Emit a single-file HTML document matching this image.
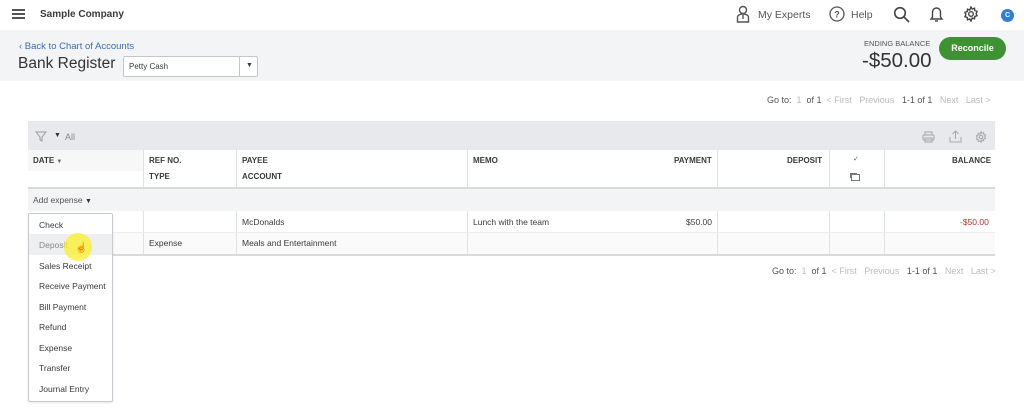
<!DOCTYPE html>
<html><head><meta charset="utf-8"><style>
*{box-sizing:border-box;margin:0;padding:0}
body{width:1024px;height:411px;overflow:hidden;background:#fff;font-family:"Liberation Sans",sans-serif;color:#393a3d;position:relative;font-size:9px}
.a{position:absolute;white-space:nowrap}
.vl{position:absolute;width:1px;background:#e0e2e6}
.hd{font-weight:bold;font-size:8px;color:#393a3d}
.mi{position:absolute;left:10px;font-size:8.5px;color:#393a3d}
</style></head><body>
<div class="a" style="left:12px;top:9px;width:13px;height:2px;background:#555;box-shadow:0 4px 0 #555,0 8px 0 #555"></div>
<div class="a" style="left:40px;top:9px;font-size:10px;font-weight:bold;color:#393a3d">Sample Company</div>
<svg class="a" style="left:736px;top:5px" width="14" height="18" viewBox="0 0 14 18" fill="none" stroke="#555" stroke-width="1.4"><circle cx="7" cy="5" r="3.5"/><path d="M1.5 17v-5a5.5 3 0 0 1 11 0v5z"/><path d="M7 10v4"/></svg>
<div class="a" style="left:758px;top:9px;font-size:10.5px;color:#555">My Experts</div>
<svg class="a" style="left:829px;top:6px" width="16" height="16" viewBox="0 0 16 16" fill="none" stroke="#555" stroke-width="1.3"><circle cx="8" cy="8" r="7"/><text x="8" y="11.5" font-size="9" text-anchor="middle" fill="#555" stroke="none" font-family="Liberation Sans" font-weight="bold">?</text></svg>
<div class="a" style="left:851px;top:9px;font-size:10.5px;color:#555">Help</div>
<svg class="a" style="left:893px;top:6px" width="17" height="17" viewBox="0 0 17 17" fill="none" stroke="#444" stroke-width="1.6"><circle cx="7" cy="7" r="5.3"/><path d="M11 11l5 5"/></svg>
<svg class="a" style="left:929px;top:5px" width="15" height="18" viewBox="0 0 15 18" fill="none" stroke="#444" stroke-width="1.4"><path d="M2 14h11l-1.5-2V7a4 4 0 0 0-8 0v5z"/><path d="M6 16h3"/></svg>
<svg class="a" style="left:963px;top:6px" width="16" height="16" viewBox="0 0 16 16" fill="none" stroke="#444" stroke-width="1.4"><circle cx="8" cy="8" r="2.3"/><path d="M8 1l1.2 2 2.3-.8.3 2.4 2.3.7-1 2.2 1 2.2-2.3.7-.3 2.4-2.3-.8L8 15l-1.2-2-2.3.8-.3-2.4-2.3-.7 1-2.2-1-2.2 2.3-.7.3-2.4 2.3.8z"/></svg>
<div class="a" style="left:1001px;top:9px;width:13px;height:13px;border-radius:50%;background:#2e7fd8;color:#fff;font-size:7px;text-align:center;line-height:13px;font-weight:bold">C</div>
<div class="a" style="left:0;top:30px;width:1024px;height:51px;background:#f3f4f6"></div>
<div class="a" style="left:19px;top:41px;font-size:9.5px;color:#3a6fb0">‹ Back to Chart of Accounts</div>
<div class="a" style="left:18px;top:55px;font-size:15.5px;color:#333">Bank Register</div>
<div class="a" style="left:123px;top:56px;width:135px;height:21px;border:1px solid #c4c6cc;background:#fff;border-radius:2px"></div>
<div class="a" style="left:129px;top:62px;font-size:8px">Petty Cash</div>
<div class="a" style="left:239px;top:57px;width:1px;height:19px;background:#c4c6cc"></div>
<div class="a" style="left:246px;top:62px;font-size:7px">▼</div>
<div class="a" style="left:864px;top:39px;font-size:7.5px;color:#555">ENDING BALANCE</div>
<div class="a" style="left:862px;top:49px;font-size:20.5px;color:#333">-$50.00</div>
<div class="a" style="left:939px;top:37px;width:67px;height:23px;border-radius:12px;background:#3f9233;color:#fff;font-weight:bold;font-size:9px;text-align:center;line-height:23px">Reconcile</div>
<div class="a" style="left:767px;top:95px;font-size:9px;color:#555">Go to: <span style="color:#bbb">&nbsp;1&nbsp;</span> of 1 <span style="color:#bbb">&nbsp;&lt; First &nbsp;&nbsp;Previous&nbsp;</span> &nbsp;1-1 of 1 <span style="color:#bbb">&nbsp;&nbsp;Next &nbsp;&nbsp;Last &gt;</span></div>
<div class="a" style="left:772px;top:266px;font-size:9px;color:#555">Go to: <span style="color:#bbb">&nbsp;1&nbsp;</span> of 1 <span style="color:#bbb">&nbsp;&lt; First &nbsp;&nbsp;Previous&nbsp;</span> &nbsp;1-1 of 1 <span style="color:#bbb">&nbsp;&nbsp;Next &nbsp;&nbsp;Last &gt;</span></div>
<div class="a" style="left:28px;top:121px;width:967px;height:29px;background:#e8e9ec"></div>
<svg class="a" style="left:35px;top:131px" width="12" height="11" viewBox="0 0 12 11" fill="none" stroke="#999" stroke-width="1"><path d="M1 1h10L7 6v4L5 9V6z"/></svg>
<div class="a" style="left:54px;top:132px;font-size:7px;color:#333">▼</div>
<div class="a" style="left:65px;top:132px;font-size:9px;color:#888">All</div>
<svg class="a" style="left:922px;top:131px" width="13" height="12" viewBox="0 0 13 12" fill="none" stroke="#aaa" stroke-width="1.1"><rect x="3" y="1" width="7" height="3"/><rect x="1" y="4" width="11" height="5" rx="1"/><rect x="3" y="7" width="7" height="4"/></svg>
<svg class="a" style="left:949px;top:130px" width="13" height="13" viewBox="0 0 13 13" fill="none" stroke="#aaa" stroke-width="1.1"><path d="M6.5 9V1M3.5 4l3-3 3 3M1 7v5h11V7"/></svg>
<svg class="a" style="left:975px;top:131px" width="12" height="12" viewBox="0 0 16 16" fill="none" stroke="#aaa" stroke-width="1.5"><circle cx="8" cy="8" r="2.3"/><path d="M8 1l1.2 2 2.3-.8.3 2.4 2.3.7-1 2.2 1 2.2-2.3.7-.3 2.4-2.3-.8L8 15l-1.2-2-2.3.8-.3-2.4-2.3-.7 1-2.2-1-2.2 2.3-.7.3-2.4 2.3.8z"/></svg>
<div class="a" style="left:28px;top:150px;width:115px;height:21px;background:#f7f7f8"></div>
<div class="a" style="left:28px;top:187px;width:967px;height:2px;background:#d8dade"></div>
<div class="vl" style="left:143px;top:150px;height:37px"></div>
<div class="vl" style="left:236px;top:150px;height:37px"></div>
<div class="vl" style="left:467px;top:150px;height:37px"></div>
<div class="vl" style="left:717px;top:150px;height:37px"></div>
<div class="vl" style="left:829px;top:150px;height:37px"></div>
<div class="vl" style="left:884px;top:150px;height:37px"></div>
<div class="a hd" style="left:33px;top:156px">DATE <span style="font-size:6px;color:#666">▼</span></div>
<div class="a hd" style="left:149px;top:156px">REF NO.</div>
<div class="a hd" style="left:149px;top:172px">TYPE</div>
<div class="a hd" style="left:242px;top:156px">PAYEE</div>
<div class="a hd" style="left:242px;top:172px">ACCOUNT</div>
<div class="a hd" style="left:473px;top:156px">MEMO</div>
<div class="a hd" style="left:674px;top:156px">PAYMENT</div>
<div class="a hd" style="left:787px;top:156px">DEPOSIT</div>
<div class="a" style="left:853px;top:155px;font-size:7px;color:#555">✓</div>
<div class="a" style="left:851px;top:174px;width:9px;height:7px;border:1px solid #777;box-shadow:-2px -2px 0 -1px #777"></div>
<div class="a hd" style="left:952px;top:156px">BALANCE</div>
<div class="a" style="left:28px;top:189px;width:967px;height:22px;background:#f3f4f6"></div>
<div class="a" style="left:33px;top:195px;font-size:8.5px;color:#555">Add expense <span style="font-size:7px;color:#333">▼</span></div>
<div class="a" style="left:28px;top:232px;width:967px;height:22px;background:#fafafa"></div>
<div class="a" style="left:28px;top:254px;width:967px;height:2px;background:#d8dade"></div>
<div class="vl" style="left:143px;top:211px;height:43px"></div>
<div class="vl" style="left:236px;top:211px;height:43px"></div>
<div class="vl" style="left:467px;top:211px;height:43px"></div>
<div class="vl" style="left:717px;top:211px;height:43px"></div>
<div class="vl" style="left:829px;top:211px;height:43px"></div>
<div class="vl" style="left:884px;top:211px;height:43px"></div>
<div class="a" style="left:28px;top:232px;width:967px;height:1px;background:#eceef0"></div>
<div class="a" style="left:242px;top:217px;font-size:8.5px">McDonalds</div>
<div class="a" style="left:473px;top:217px;font-size:8.5px">Lunch with the team</div>
<div class="a" style="left:686px;top:217px;font-size:8.5px">$50.00</div>
<div class="a" style="left:960px;top:217px;font-size:8.5px;color:#b0302a">-$50.00</div>
<div class="a" style="left:149px;top:238px;font-size:8.5px">Expense</div>
<div class="a" style="left:242px;top:238px;font-size:8.5px">Meals and Entertainment</div>
<div class="a" style="left:28px;top:213px;width:85px;height:189px;background:#fff;border:1px solid #c8cacf;border-radius:2px;box-shadow:0 1px 2px rgba(0,0,0,.1)">
<div class="a" style="left:0;top:20px;width:83px;height:21px;background:#eeeff1"></div>
<div class="mi" style="top:6px">Check</div>
<div class="mi" style="top:26px;color:#888">Deposit</div>
<div class="mi" style="top:47px">Sales Receipt</div>
<div class="mi" style="top:67px">Receive Payment</div>
<div class="mi" style="top:88px">Bill Payment</div>
<div class="mi" style="top:108px">Refund</div>
<div class="mi" style="top:129px">Expense</div>
<div class="mi" style="top:149px">Transfer</div>
<div class="mi" style="top:170px">Journal Entry</div>
</div>
<div class="a" style="left:64px;top:233px;width:28px;height:28px;border-radius:50%;background:rgba(250,240,40,.75)"></div>
<div class="a" style="left:75px;top:243px;font-size:10px;color:#333">☝</div>
</body></html>
